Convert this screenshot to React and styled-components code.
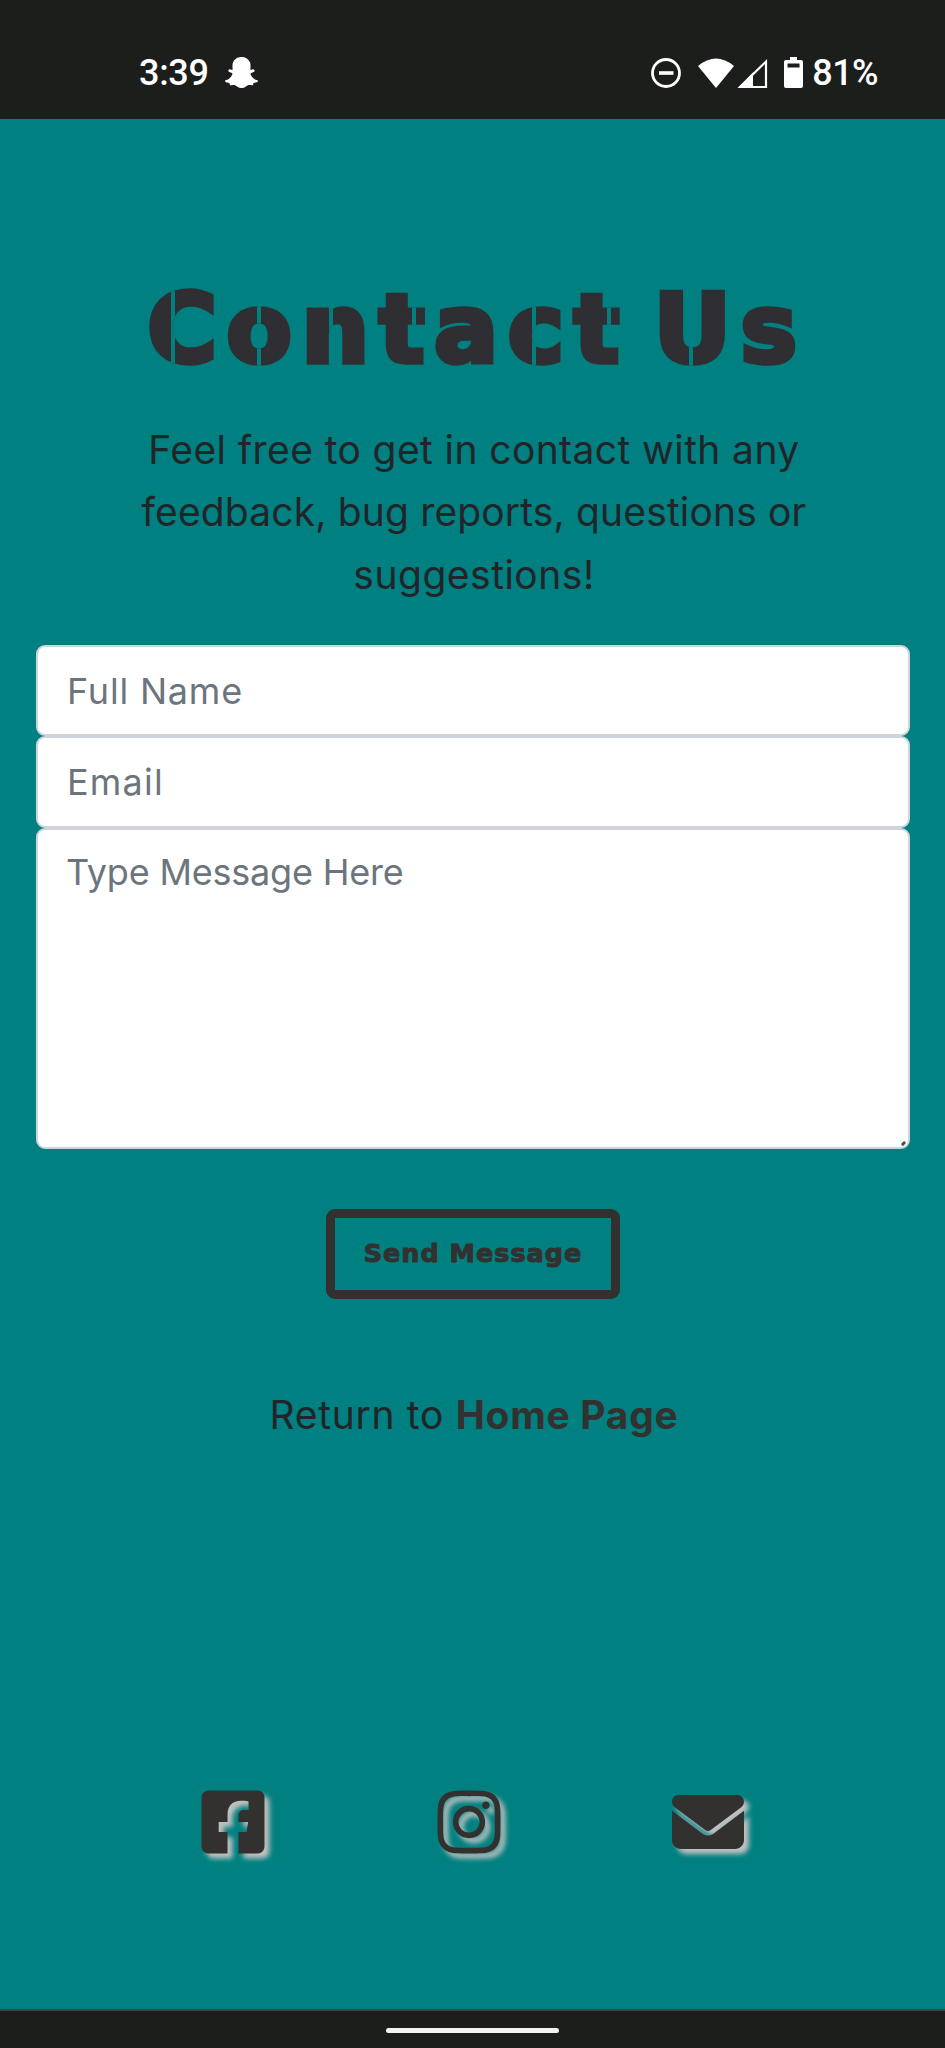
import React from "react";
import styled, { createGlobalStyle } from "styled-components";
import { FaFacebookSquare, FaInstagram, FaSnapchatGhost } from "react-icons/fa";
import { FaEnvelope } from "react-icons/fa6";

const ink = "#2f2e33";
const charcoal = "#33312f";
const teal = "#008080";
const bar = "#1c1e1b";

const GlobalStyle = createGlobalStyle`
  *, *::before, *::after { box-sizing: border-box; }
  body {
    margin: 0;
    background: ${teal};
    font-family: Inter, "Noto Sans", sans-serif;
  }
`;

const Screen = styled.div`
  display: flex;
  flex-direction: column;
  width: 945px;
  height: 2048px;
  background: ${teal};
  overflow: hidden;
`;

const StatusBar = styled.header`
  display: flex;
  justify-content: space-between;
  align-items: center;
  height: 119px;
  flex: none;
  padding: 26px 67px 0 139px;
  background: ${bar};
  color: #fff;
  font: 500 36px/42px Roboto, sans-serif;
`;

const StatusGroup = styled.div`
  display: flex;
  align-items: center;
`;

const Clock = styled.span`
  letter-spacing: -0.3px;
  margin-right: 16px;
`;

const Battery = styled.span`
  letter-spacing: -0.6px;
  margin-left: 9px;
`;

const Glyph = styled.svg`
  display: block;
  flex: none;
  margin-left: ${(p) => p.$gap || 0}px;
`;

const Main = styled.main`
  display: flex;
  flex-direction: column;
  align-items: center;
  flex: 1;
  padding: 150px 35px 0 36px;
`;

const cut = (x, y = "0", h = "100%") =>
  `linear-gradient(${teal}, ${teal}) ${x}px ${y} / 4px ${h} no-repeat`;

const Title = styled.h1`
  margin: 0 0 30px;
  padding-left: 8px;
  font: 700 95px/120px "DejaVu Sans", sans-serif;
  letter-spacing: 9.7px;
  word-spacing: -18px;
  white-space: nowrap;
  color: transparent;
  -webkit-text-stroke: 5.5px transparent;
  background: ${cut(32)}, ${cut(118)}, ${cut(190)}, ${cut(273, "0", "55%")},
    ${cut(393)}, ${cut(468, "0", "55%")}, ${cut(550)}, ${ink};
  -webkit-background-clip: text;
  background-clip: text;
`;

const Intro = styled.p`
  margin: 0 0 39px;
  padding-left: 2px;
  font-size: 39px;
  line-height: 62.3px;
  text-align: center;
  color: #212529;
`;

const Line = styled.span`
  display: block;
  letter-spacing: ${(p) => p.$track}px;
`;

const Form = styled.form`
  display: flex;
  flex-direction: column;
  align-items: center;
  width: 100%;
`;

const Field = styled.input`
  display: block;
  width: 100%;
  height: 91.5px;
  margin: 0;
  padding: 0 28px 0 29px;
  border: 2px solid #ced4da;
  border-radius: 9px;
  background: #fff;
  font: 400 36px/54px Inter, sans-serif;
  letter-spacing: ${(p) => p.$track}px;
  outline: none;
  &::placeholder { color: #6c757d; opacity: 1; }
`;

const MessageWrap = styled.div`
  position: relative;
  width: 100%;
  height: 321px;
`;

const Message = styled(Field)`
  height: 321px;
  padding: 15px 28px;
  resize: none;
`;

const Grip = styled.span`
  position: absolute;
  right: 4px;
  bottom: 4px;
  width: 5px;
  height: 3px;
  border-radius: 2px;
  background: #444b4d;
  transform: rotate(-45deg);
`;

const SendButton = styled.button`
  width: 294px;
  height: 90px;
  margin-top: 60px;
  padding: 0 0 2px;
  border: 9px solid ${charcoal};
  border-radius: 9px;
  background: transparent;
  color: ${charcoal};
  font: 700 25.5px/30px "DejaVu Sans", sans-serif;
  letter-spacing: 1px;
  -webkit-text-stroke: 1px ${charcoal};
  white-space: nowrap;
`;

const Return = styled.p`
  margin: 85px 0 0;
  padding-left: 2px;
  font-size: 39px;
  line-height: 62.3px;
  letter-spacing: 0.7px;
  color: #212529;
`;

const HomeLink = styled.a`
  font-weight: 700;
  color: ${charcoal};
`;

const Socials = styled.nav`
  display: grid;
  grid-template-columns: 236px 236px 243px;
  justify-items: center;
  margin: 340px 2px 0 0;
`;

const Social = styled.a`
  display: block;
  height: 72px;
  color: ${charcoal};
  svg {
    display: block;
    overflow: visible;
    filter: drop-shadow(5px 5px 2.5px #c0c0c0);
  }
`;

const NavBar = styled.footer`
  display: flex;
  justify-content: center;
  flex: none;
  height: 39px;
  padding-top: 17px;
  border-top: 2px solid #3f4641;
  background: ${bar};
`;

const Handle = styled.span`
  width: 173px;
  height: 5px;
  border-radius: 3px;
  background: #f2f3ee;
`;

export default function App() {
  return (
    <>
      <GlobalStyle />
      <Screen>
        <StatusBar>
          <StatusGroup>
            <Clock>3:39</Clock>
            <FaSnapchatGhost size={33} />
          </StatusGroup>
          <StatusGroup>
            <Glyph width="30" height="30" viewBox="0 0 30 30">
              <circle cx="15" cy="15" r="13.5" fill="none" stroke="#fff" strokeWidth="2.8" />
              <path d="M8 15h14.5" stroke="#fff" strokeWidth="3.6" />
            </Glyph>
            <Glyph $gap={17} width="36" height="30" viewBox="0 0 36 30">
              <path d="M0 8Q18 -7 36 8L18 30Z" fill="#fff" />
            </Glyph>
            <Glyph $gap={3} width="31" height="30" viewBox="0 0 31 30">
              <path d="M3 29H29V3.5Z" fill="none" stroke="#fff" strokeWidth="2.2" />
              <path d="M2 29L16 14.5V29Z" fill="#fff" />
            </Glyph>
            <Glyph $gap={16} width="19" height="31" viewBox="0 0 19 31">
              <path
                fillRule="evenodd"
                fill="#fff"
                d="M6 0h7v3h4q2 0 2 2v24q0 2-2 2H2q-2 0-2-2V5q0-2 2-2h4ZM3.5 6.5v4h12v-4Z"
              />
            </Glyph>
            <Battery>81%</Battery>
          </StatusGroup>
        </StatusBar>
        <Main>
          <Title>Contact Us</Title>
          <Intro>
            <Line $track={0.4}>Feel free to get in contact with any</Line>
            <Line $track={0.15}>feedback, bug reports, questions or</Line>
            <Line $track={0.5}>suggestions!</Line>
          </Intro>
          <Form>
            <Field $track={0.8} placeholder="Full Name" />
            <Field $track={1.2} placeholder="Email" />
            <MessageWrap>
              <Message as="textarea" $track={-0.2} placeholder="Type Message Here" />
              <Grip />
            </MessageWrap>
            <SendButton type="button">Send Message</SendButton>
          </Form>
          <Return>
            Return to <HomeLink>Home Page</HomeLink>
          </Return>
          <Socials>
            <Social><FaFacebookSquare size={72} /></Social>
            <Social><FaInstagram size={72} /></Social>
            <Social><FaEnvelope size={72} /></Social>
          </Socials>
        </Main>
        <NavBar>
          <Handle />
        </NavBar>
      </Screen>
    </>
  );
}
